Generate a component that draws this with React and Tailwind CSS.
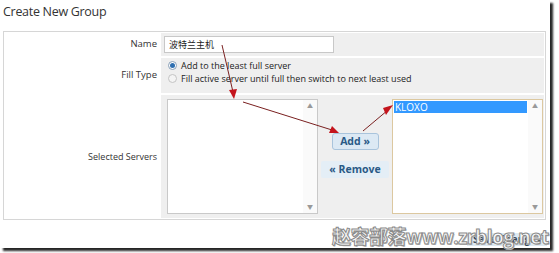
import React from 'react';

const ui = { fontFamily: '"Open Sans", "Noto Sans", "Noto Sans CJK SC", sans-serif' };

function ListBox({ focused, items = [] }) {
  return (
    <div
      className={`flex h-[115px] w-[151px] bg-white border ${
        focused ? 'border-[#dcc8a0]' : 'border-[#c9c9c9]'
      }`}
    >
      <div className="flex-1 p-[1px]">
        {items.map((it) => (
          <div key={it} className="h-[12px] bg-[#3399ff] pl-[1px] text-[10px] leading-[12px] text-white">
            {it}
          </div>
        ))}
      </div>
      <div className="flex w-[14px] flex-col items-center justify-between bg-[#fafafa] py-[3px] text-[6px] leading-none text-[#999]">
        <span>▲</span>
        <span>▼</span>
      </div>
    </div>
  );
}

export default function App() {
  return (
    <div className="relative h-[253px] w-[559px] overflow-hidden bg-white" style={ui}>
      <div className="relative h-[248px] w-[550px] bg-white shadow-[3px_3px_2px_rgba(0,0,0,0.85)]">
        <h1 className="px-[3px] pt-[3px] text-[12.5px] leading-[18px] tracking-[-0.3px] text-[#333]">Create New Group</h1>

        <div className="mx-[3px] mt-[10px] flex w-[543px] flex-col gap-[2px] border border-[#d6d6d6] p-[1px]">
          <div className="flex h-[23px] gap-[2px]">
            <div className="flex w-[154px] items-center justify-end pr-[2px] text-[9.5px] text-[#333]">Name</div>
            <div className="flex flex-1 items-center bg-[#efefef] pl-[3px]">
              <div className="flex h-[17px] w-[170px] items-center border border-[#c8c8c8] bg-white pl-[4px] text-[9px] text-[#222]">
                波特兰主机
              </div>
            </div>
          </div>

          <div className="flex h-[35px] gap-[2px]">
            <div className="flex w-[154px] items-center justify-end pr-[2px] text-[9.5px] text-[#333]">Fill Type</div>
            <div className="flex flex-1 flex-col bg-[#efefef] pl-[7px] pt-[1px] text-[9px] leading-[13px] text-[#222]">
              <div className="flex items-center gap-[4px]">
                <span className="flex h-[9px] w-[9px] items-center justify-center rounded-full border border-[#8aa0b8] bg-white">
                  <span className="h-[5px] w-[5px] rounded-full bg-[#2f6fb0]" />
                </span>
                Add to the least full server
              </div>
              <div className="flex items-center gap-[4px]">
                <span className="h-[9px] w-[9px] rounded-full border border-[#c4c4c4] bg-[#f4f4f4]" />
                Fill active server until full then switch to next least used
              </div>
            </div>
          </div>

          <div className="flex h-[123px] gap-[2px]">
            <div className="flex w-[154px] items-center justify-end pr-[2px] text-[9px] text-[#333]">Selected Servers</div>
            <div className="flex flex-1 items-center bg-[#efefef] pl-[6px]">
              <ListBox />
              <div className="flex w-[74px] flex-col items-center gap-[11px] self-stretch pt-[38px]">
                <button className="h-[17px] w-[47px] rounded-[3px] border border-[#a9c4dc] bg-[#dce9f4] text-[10.5px] font-bold leading-none text-[#2a5a86]">
                  Add »
                </button>
                <button className="h-[17px] w-[68px] rounded-[2px] bg-[#e4eef6] text-[10.5px] font-bold leading-none text-[#2a5a86]">
                  « Remove
                </button>
              </div>
              <ListBox focused items={['KLOXO']} />
            </div>
          </div>
        </div>

        <div className="mr-[3px] mt-[13px] flex justify-end">
          <div className="flex h-[13px] w-[80px] items-center justify-center bg-[#dde9f2] text-[10px] font-bold text-[#3a4a5a]">
            Save Changes
          </div>
        </div>

        <div
          className="absolute left-[332px] top-[226px] text-[19px] font-bold leading-[22px] tracking-[-0.5px] text-white/90 [-webkit-text-stroke:1px_#8a8a8a] [text-shadow:1px_1px_0_#bbb]"
          style={ui}
        >
          赵容部落www.zrblog.net
        </div>

        <svg className="absolute left-0 top-0" width="559" height="253">
          <g stroke="#7a2020" strokeWidth="1" fill="none">
            <line x1="222" y1="45" x2="233" y2="92" />
            <line x1="243" y1="102" x2="332" y2="130" />
            <line x1="363" y1="131" x2="388" y2="110" />
          </g>
          <g fill="#c4141c">
            <polygon points="234,99 229,90 237,89" />
            <polygon points="339,133 329,133 332,126" />
            <polygon points="393,105 386,115 383,108" />
          </g>
        </svg>
      </div>
    </div>
  );
}
